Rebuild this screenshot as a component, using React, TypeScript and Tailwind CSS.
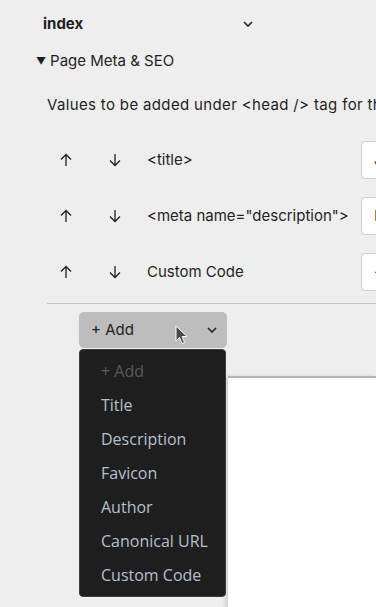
import React from "react";

const Up = () => (
  <svg width="14" height="14" viewBox="0 0 14 14" fill="none" stroke="#222" strokeWidth="1.3">
    <path d="M7 13V1.5M2 6.5L7 1.5L12 6.5" />
  </svg>
);
const Down = () => (
  <svg width="14" height="14" viewBox="0 0 14 14" fill="none" stroke="#222" strokeWidth="1.3">
    <path d="M7 1V12.5M2 7.5L7 12.5L12 7.5" />
  </svg>
);
const Chevron = () => (
  <svg width="10" height="6" viewBox="0 0 10 6" fill="none" stroke="#222" strokeWidth="1.6">
    <path d="M1 1L5 5L9 1" />
  </svg>
);

const rows = [
  { label: "<title>", val: "J" },
  { label: '<meta name="description">', val: "I" },
  { label: "Custom Code", val: "-" },
];

const items = ["Title", "Description", "Favicon", "Author", "Canonical URL", "Custom Code"];

export default function App() {
  return (
    <div
      className="w-[376px] h-[607px] overflow-hidden bg-[#eeeeee] text-[#1f1f1f] relative"
      style={{ fontFamily: "Inter, 'Noto Sans', sans-serif" }}
    >
      <div className="flex items-center pl-[43px] pt-[13px] h-[35px] w-[253px]">
        <span className="font-bold text-[15px] flex-1">index</span>
        <Chevron />
      </div>
      <div className="pl-[36px] mt-[16px] text-[15px] flex items-center h-[20px]">
        <span className="text-[10px] mr-[4px]">▼</span>
        <span>Page Meta &amp; SEO</span>
      </div>
      <div className="pl-[47px] mt-[24px] text-[15px] tracking-[0.35px] whitespace-nowrap h-[20px] leading-[20px]">
        Values to be added under &lt;head /&gt; tag for the page
      </div>
      <div className="ml-[47px] mt-[26px] flex flex-col gap-[18px]">
        {rows.map((r, i) => (
          <div key={i} className="flex items-center h-[38px] whitespace-nowrap">
            <div className="w-[14px] shrink-0 ml-[12px] flex justify-center"><Up /></div>
            <div className="w-[14px] shrink-0 ml-[35px] flex justify-center"><Down /></div>
            <div className="ml-[25px] w-[214px] shrink-0 text-[15px]">{r.label}</div>
            <div className="h-[38px] w-[60px] shrink-0 bg-white border border-[#cfcfcf] rounded-[4px] flex items-center pl-[12px] text-[15px] text-[#444]">
              {r.val}
            </div>
          </div>
        ))}
      </div>
      <div className="ml-[47px] mt-[12px] h-px bg-[#c4c4c4]" />
      <div className="ml-[79px] mt-[8px] w-[148px] h-[36px] bg-[#bdbdbd] rounded-[5px] flex items-center pl-[12px] pr-[10px] text-[15px]">
        <span className="flex-1">+ Add</span>
        <Chevron />
      </div>
      <div className="flex items-start">
        <div
          className="ml-[79px] mt-[1px] w-[147px] bg-[#1e1e1e] border border-[#3c3c3c] rounded-[4px] pt-[4px] pb-[4px] relative z-10"
          style={{ fontFamily: "'Open Sans', 'Noto Sans', sans-serif" }}
        >
          <div className="pl-[21px] h-[34px] leading-[34px] text-[16px] text-[#5a5a5a]">+ Add</div>
          {items.map((t) => (
            <div key={t} className="pl-[21px] h-[34px] leading-[34px] text-[16px] text-[#b4c0d0] whitespace-nowrap">
              {t}
            </div>
          ))}
        </div>
        <div className="ml-[2px] mt-[28px] flex-1 h-[240px] bg-white border-t-2 border-[#b8b8b8] shadow-[-3px_0_4px_rgba(0,0,0,0.12)]" />
      </div>
      <svg className="absolute left-[175px] top-[325px]" width="14" height="20" viewBox="0 0 14 20">
        <path d="M1 1V16L4.5 12.5L7 18.5L9.5 17.5L7 11.5H12Z" fill="#4a4a4a" stroke="#fff" strokeWidth="1" strokeLinejoin="round" />
      </svg>
    </div>
  );
}
